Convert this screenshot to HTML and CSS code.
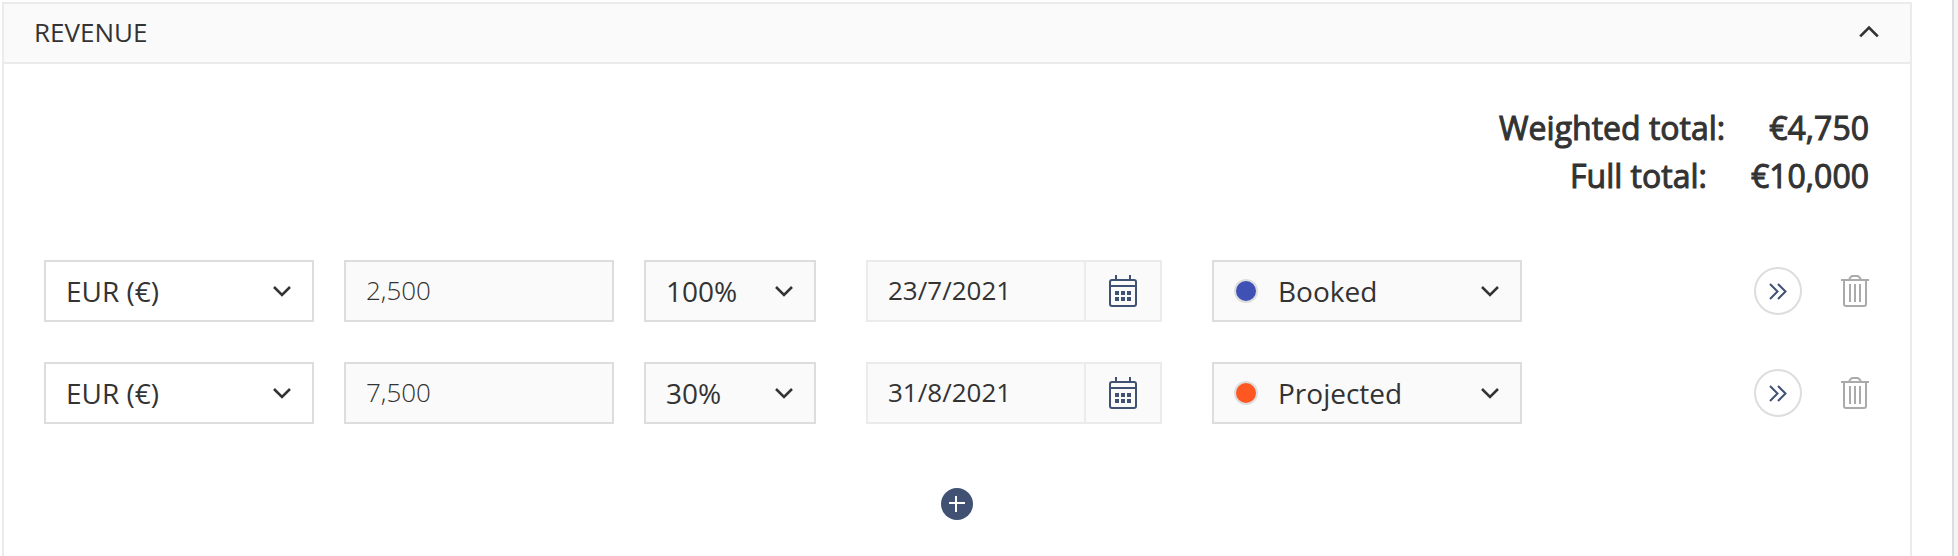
FILE: index.html
```html
<!DOCTYPE html>
<html lang="en">
  <head>
    <meta charset="UTF-8" />
    <meta name="viewport" content="width=device-width, initial-scale=1.0" />
    <title>Revenue</title>
    <link rel="stylesheet" href="styles.css">
  </head>
  <body>
    <!-- Shared icons -->
    <svg class="sprite" aria-hidden="true">
      <symbol id="chevron" viewBox="0 0 20 14">
        <path d="M2 3l8 8 8-8" />
      </symbol>
      <symbol id="calendar" viewBox="0 0 28 32">
        <rect x="1" y="5" width="26" height="26" rx="2" />
        <path d="M1 11h26M7 0v5M21 0v5" />
        <path class="dots" d="M6 16h4v4H6zM12 16h4v4h-4zM18 16h4v4h-4zM6 22h4v4H6zM12 22h4v4h-4zM18 22h4v4h-4z" />
      </symbol>
      <symbol id="forward" viewBox="0 0 18 18">
        <path d="M1 2l7.500 7.500-7.500 7.500M9 2l7.500 7.500-7.500 7.500" />
      </symbol>
      <symbol id="trash" viewBox="0 0 28 32">
        <path d="M0 5h28M3 5v24a2 2 0 0 0 2 2h18a2 2 0 0 0 2-2V5M8 5c1-3 2-4 4-4h4c2 0 3 1 4 4M9 9v18M14 9v18M19 9v18" />
      </symbol>
    </svg>

    <section class="panel">
      <header class="panel-header">
        <h2>REVENUE</h2>
        <button type="button" class="icon-button" aria-label="Collapse">
          <svg class="chevron chevron-up"><use href="#chevron" /></svg>
        </button>
      </header>

      <div class="panel-body">
        <div class="totals">
          <p><span>Weighted total:</span><span>€4,750</span></p>
          <p><span>Full total:</span><span>€10,000</span></p>
        </div>

        <form class="rows">
          <div class="row">
            <div class="select currency">
              <select aria-label="Currency">
                <option>EUR (€)</option>
              </select>
              <svg class="chevron"><use href="#chevron" /></svg>
            </div>
            <input class="amount" type="text" value="2,500" aria-label="Amount" />
            <div class="select percent">
              <select aria-label="Probability">
                <option>100%</option>
              </select>
              <svg class="chevron"><use href="#chevron" /></svg>
            </div>
            <div class="date">
              <input type="text" value="23/7/2021" aria-label="Date" />
              <button type="button" aria-label="Open calendar">
                <svg class="calendar"><use href="#calendar" /></svg>
              </button>
            </div>
            <div class="select status">
              <span class="dot booked"></span>
              <select aria-label="Status">
                <option>Booked</option>
              </select>
              <svg class="chevron"><use href="#chevron" /></svg>
            </div>
            <div class="actions">
              <button type="button" class="round-button" aria-label="Move forward">
                <svg class="forward"><use href="#forward" /></svg>
              </button>
              <button type="button" class="icon-button" aria-label="Delete">
                <svg class="trash"><use href="#trash" /></svg>
              </button>
            </div>
          </div>

          <div class="row">
            <div class="select currency">
              <select aria-label="Currency">
                <option>EUR (€)</option>
              </select>
              <svg class="chevron"><use href="#chevron" /></svg>
            </div>
            <input class="amount" type="text" value="7,500" aria-label="Amount" />
            <div class="select percent">
              <select aria-label="Probability">
                <option>30%</option>
              </select>
              <svg class="chevron"><use href="#chevron" /></svg>
            </div>
            <div class="date">
              <input type="text" value="31/8/2021" aria-label="Date" />
              <button type="button" aria-label="Open calendar">
                <svg class="calendar"><use href="#calendar" /></svg>
              </button>
            </div>
            <div class="select status">
              <span class="dot projected"></span>
              <select aria-label="Status">
                <option>Projected</option>
              </select>
              <svg class="chevron"><use href="#chevron" /></svg>
            </div>
            <div class="actions">
              <button type="button" class="round-button" aria-label="Move forward">
                <svg class="forward"><use href="#forward" /></svg>
              </button>
              <button type="button" class="icon-button" aria-label="Delete">
                <svg class="trash"><use href="#trash" /></svg>
              </button>
            </div>
          </div>
        </form>

        <button type="button" class="add-button" aria-label="Add revenue">
          <svg viewBox="0 0 32 32"><path d="M8 15h16M15 8v16" /></svg>
        </button>
      </div>
    </section>
    <div class="side"></div>
  </body>
</html>
```
FILE: styles.css
```css
* {
  box-sizing: border-box;
}

body {
  margin: 0;
  min-height: 100vh;
  display: flex;
  background: #fff;
  color: #333;
  font-family: "Open Sans", sans-serif;
  font-size: 28px;
}

h2,
p {
  margin: 0;
}

button,
input,
select {
  margin: 0;
  padding: 0;
  border: none;
  border-radius: 0;
  background: none;
  color: inherit;
  font: inherit;
}

button {
  display: flex;
  align-items: center;
  justify-content: center;
  cursor: pointer;
}

svg {
  display: block;
  flex: none;
  fill: none;
  stroke: currentColor;
  stroke-width: 2;
}

.sprite {
  position: absolute;
  width: 0;
  height: 0;
}

/* Panel */
.panel {
  flex: 1;
  margin: 2px 40px 0 2px;
  border: 2px solid #ebebeb;
  border-bottom: none;
}

.panel-header {
  display: flex;
  align-items: center;
  justify-content: space-between;
  height: 60px;
  padding: 0 30px 2px;
  background: #fafafa;
  border-bottom: 2px solid #ebebeb;
}

.panel-header h2 {
  font-size: 26px;
  font-weight: 400;
}

.panel-body {
  padding: 40px 41px 36px 40px;
}

.side {
  width: 6px;
  background: #f3f4f6;
  border-left: 2px solid #ddd;
}

/* Totals */
.totals {
  font-size: 32px;
  line-height: 48px;
  -webkit-text-stroke: 1px #333;
}

.totals p {
  display: flex;
  justify-content: flex-end;
  gap: 44px;
}

/* Revenue rows */
.rows {
  display: grid;
  gap: 40px;
  margin-top: 60px;
}

.row {
  display: flex;
  align-items: center;
}

.select {
  display: flex;
  align-items: center;
  position: relative;
  height: 62px;
  background: #fafafa;
  border: 2px solid #ddd;
}

.select select {
  flex: 1;
  min-width: 0;
  height: 100%;
  padding-left: 20px;
  appearance: none;
}

.select .chevron {
  position: absolute;
  right: 20px;
  pointer-events: none;
}

.currency {
  width: 270px;
  background: #fff;
}

.amount {
  width: 270px;
  height: 62px;
  margin: 0 30px;
  padding: 0 20px 2px;
  background: #fafafa;
  border: 2px solid #ddd;
  font-size: 26px;
  font-weight: 300;
}

.percent {
  width: 172px;
}

.date {
  display: flex;
  width: 296px;
  height: 62px;
  margin: 0 50px;
  background: #fafafa;
  border: 2px solid #ebebeb;
  font-size: 26px;
}

.date input {
  flex: 1;
  min-width: 0;
  padding: 0 20px 2px;
}

.date button {
  width: 76px;
  border-left: 2px solid #ebebeb;
  color: #405174;
}

.status {
  width: 310px;
}

.dot {
  width: 24px;
  height: 24px;
  margin-left: 20px;
  border: 2px solid #ddd;
  border-radius: 50%;
}

.booked {
  background: #3f51b5;
}

.projected {
  background: #ff5722;
}

.actions {
  display: flex;
  align-items: center;
  gap: 39px;
  margin-left: auto;
}

.round-button {
  width: 48px;
  height: 48px;
  border: 2px solid #ddd;
  border-radius: 50%;
  color: #405174;
}

.add-button {
  width: 32px;
  height: 32px;
  margin: 64px auto 0;
  border-radius: 50%;
  background: #405174;
  color: #fff;
}

/* Icons */
.chevron {
  width: 20px;
  height: 14px;
  stroke-width: 2.5;
}

.chevron-up {
  width: 22px;
  height: 16px;
  transform: rotate(180deg);
}

.calendar,
.trash {
  width: 28px;
  height: 32px;
}

.dots {
  fill: currentColor;
  stroke: none;
}

.trash {
  color: #aaa;
}

.forward {
  width: 18px;
  height: 18px;
}
```
